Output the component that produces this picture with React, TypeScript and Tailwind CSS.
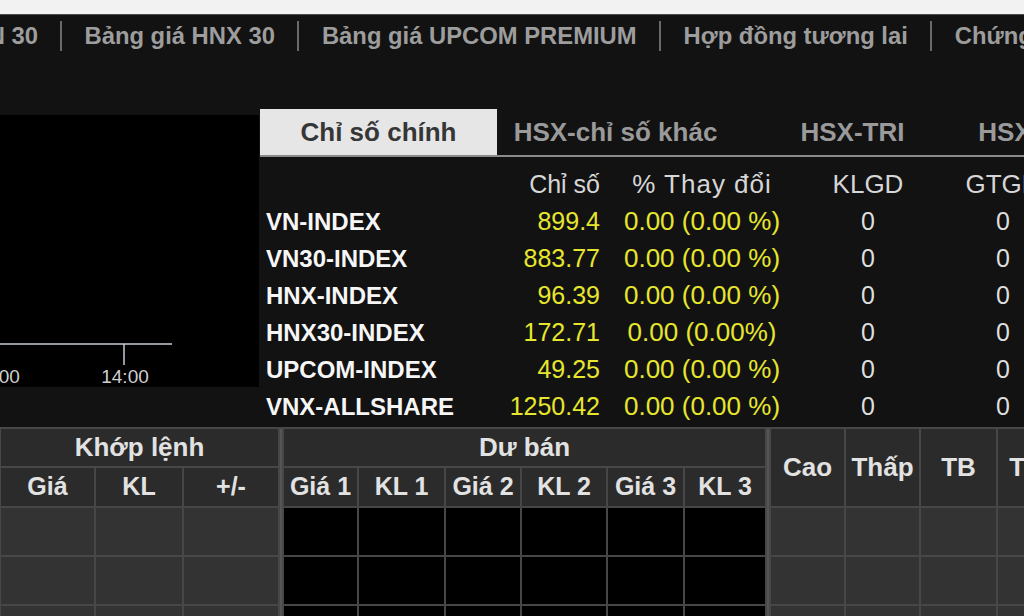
import React from "react";

const navItems = ["Bảng giá HNX 30", "Bảng giá UPCOM PREMIUM", "Hợp đồng tương lai", "Chứng quyền"];

const tabs = ["Chỉ số chính", "HSX-chỉ số khác", "HSX-TRI", "HSX-chỉ số ngành"];

const indices = [
  { name: "VN-INDEX", value: "899.4", change: "0.00 (0.00 %)" },
  { name: "VN30-INDEX", value: "883.77", change: "0.00 (0.00 %)" },
  { name: "HNX-INDEX", value: "96.39", change: "0.00 (0.00 %)" },
  { name: "HNX30-INDEX", value: "172.71", change: "0.00 (0.00%)" },
  { name: "UPCOM-INDEX", value: "49.25", change: "0.00 (0.00 %)" },
  { name: "VNX-ALLSHARE", value: "1250.42", change: "0.00 (0.00 %)" },
];

const matchCols = ["Giá", "KL", "+/-"];
const sellCols = ["Giá 1", "KL 1", "Giá 2", "KL 2", "Giá 3", "KL 3"];
const statCols = ["Cao", "Thấp", "TB", "Tổng KL"];

function Chart() {
  return (
    <svg width="259" height="272" className="block bg-black">
      <line x1="0" y1="229" x2="172" y2="229" stroke="#c4ccd4" strokeWidth="1.5" />
      <line x1="-4" y1="229" x2="-4" y2="250" stroke="#c4ccd4" strokeWidth="1.5" />
      <line x1="124" y1="229" x2="124" y2="250" stroke="#c4ccd4" strokeWidth="1.5" />
      <text x="-4" y="268" textAnchor="middle" fill="#cfcfcf" fontSize="19" fontFamily="'Liberation Sans', Arial, sans-serif">
        13:00
      </text>
      <text x="125" y="268" textAnchor="middle" fill="#cfcfcf" fontSize="19" fontFamily="'Liberation Sans', Arial, sans-serif">
        14:00
      </text>
    </svg>
  );
}

function IndexPanel() {
  return (
    <div className="flex-1 min-w-0 overflow-hidden">
      <div className="flex border-b-2 border-[#8a8a8a]">
        {tabs.map((t, i) => (
          <div
            key={t}
            className={
              i === 0
                ? "w-[237px] h-[46px] shrink-0 flex items-center justify-center bg-[#e6e6e6] text-[#363636] font-bold text-[26px] whitespace-nowrap"
                : "w-[237px] h-[46px] shrink-0 flex items-center justify-center text-[#9a9a9a] font-bold text-[26px] whitespace-nowrap"
            }
          >
            {t}
          </div>
        ))}
      </div>
      <div className="pl-[6px] pt-[9px] grid grid-cols-[200px_134px_204px_128px_142px] leading-[37px] whitespace-nowrap">
        <div />
        <div className="text-right text-[25px] text-[#d6d6d6]">Chỉ số</div>
        <div className="text-center text-[26px] tracking-[1px] text-[#d6d6d6]">% Thay đổi</div>
        <div className="text-center text-[26px] text-[#d6d6d6]">KLGD</div>
        <div className="text-center text-[26px] text-[#d6d6d6]">GTGD</div>
        {indices.map((r) => (
          <React.Fragment key={r.name}>
            <div className="font-bold text-[24px] text-[#f6f6f6]">{r.name}</div>
            <div className="text-right text-[25px] text-[#e6e62e]">{r.value}</div>
            <div className="text-center text-[26px] text-[#e6e62e]">{r.change}</div>
            <div className="text-center text-[25px] text-[#dedede]">0</div>
            <div className="text-center text-[25px] text-[#dedede]">0</div>
          </React.Fragment>
        ))}
      </div>
    </div>
  );
}

function BoardTable() {
  const head = "bg-[#2b2b2b] flex items-center justify-center font-bold text-[26px] text-[#e2e2e2] whitespace-nowrap";
  const sub = "bg-[#2b2b2b] flex items-center justify-center font-bold text-[25px] text-[#e2e2e2] whitespace-nowrap";
  return (
    <div className="grid grid-cols-[93px_86px_94px_2px_73px_85px_74px_84px_75px_80px_2px_73px_73px_75px_128px] grid-rows-[37px_38px_47px_47px_47px] gap-[2px] pl-px pt-[2px] bg-[#474747] w-max">
      <div className={`${head} col-span-3`}>Khớp lệnh</div>
      <div className="row-span-5 bg-[#555]" />
      <div className={`${head} col-span-6`}>Dư bán</div>
      <div className="row-span-5 bg-[#555]" />
      {statCols.map((c) => (
        <div key={c} className={`${head} row-span-2`}>
          {c}
        </div>
      ))}
      {matchCols.map((c) => (
        <div key={c} className={sub}>
          {c}
        </div>
      ))}
      {sellCols.map((c) => (
        <div key={c} className={sub}>
          {c}
        </div>
      ))}
      {[0, 1, 2].map((r) => (
        <React.Fragment key={r}>
          {matchCols.map((c) => (
            <div key={c} className="bg-[#333]" />
          ))}
          {sellCols.map((c) => (
            <div key={c} className="bg-black" />
          ))}
          {statCols.map((c) => (
            <div key={c} className="bg-[#333]" />
          ))}
        </React.Fragment>
      ))}
    </div>
  );
}

export default function App() {
  return (
    <div className="w-[1024px] h-[616px] overflow-hidden bg-[#121212] font-['Liberation_Sans',Arial,sans-serif]">
      <div className="h-[14px] bg-[#f2f2f2] border-b border-[#4d4d4d] box-content" />

      {/* top menu, scrolled so the first item is cut */}
      <nav className="h-[41px] flex items-center whitespace-nowrap font-bold text-[23.8px] text-[#9d9d9d]">
        <div className="w-[60px] shrink-0 flex justify-end overflow-hidden pr-[22px]">
          <span className="shrink-0">Bảng giá VN 30</span>
        </div>
        {navItems.map((item) => (
          <React.Fragment key={item}>
            <span className="w-[2px] h-[30px] bg-[#6a6a6a] shrink-0" />
            <span className="px-[22.5px] shrink-0">{item}</span>
          </React.Fragment>
        ))}
      </nav>

      <div className="mt-[53px] h-[318px] flex">
        <div className="w-[260px] shrink-0 pt-[6px]">
          <Chart />
        </div>
        <IndexPanel />
      </div>

      <BoardTable />
    </div>
  );
}
